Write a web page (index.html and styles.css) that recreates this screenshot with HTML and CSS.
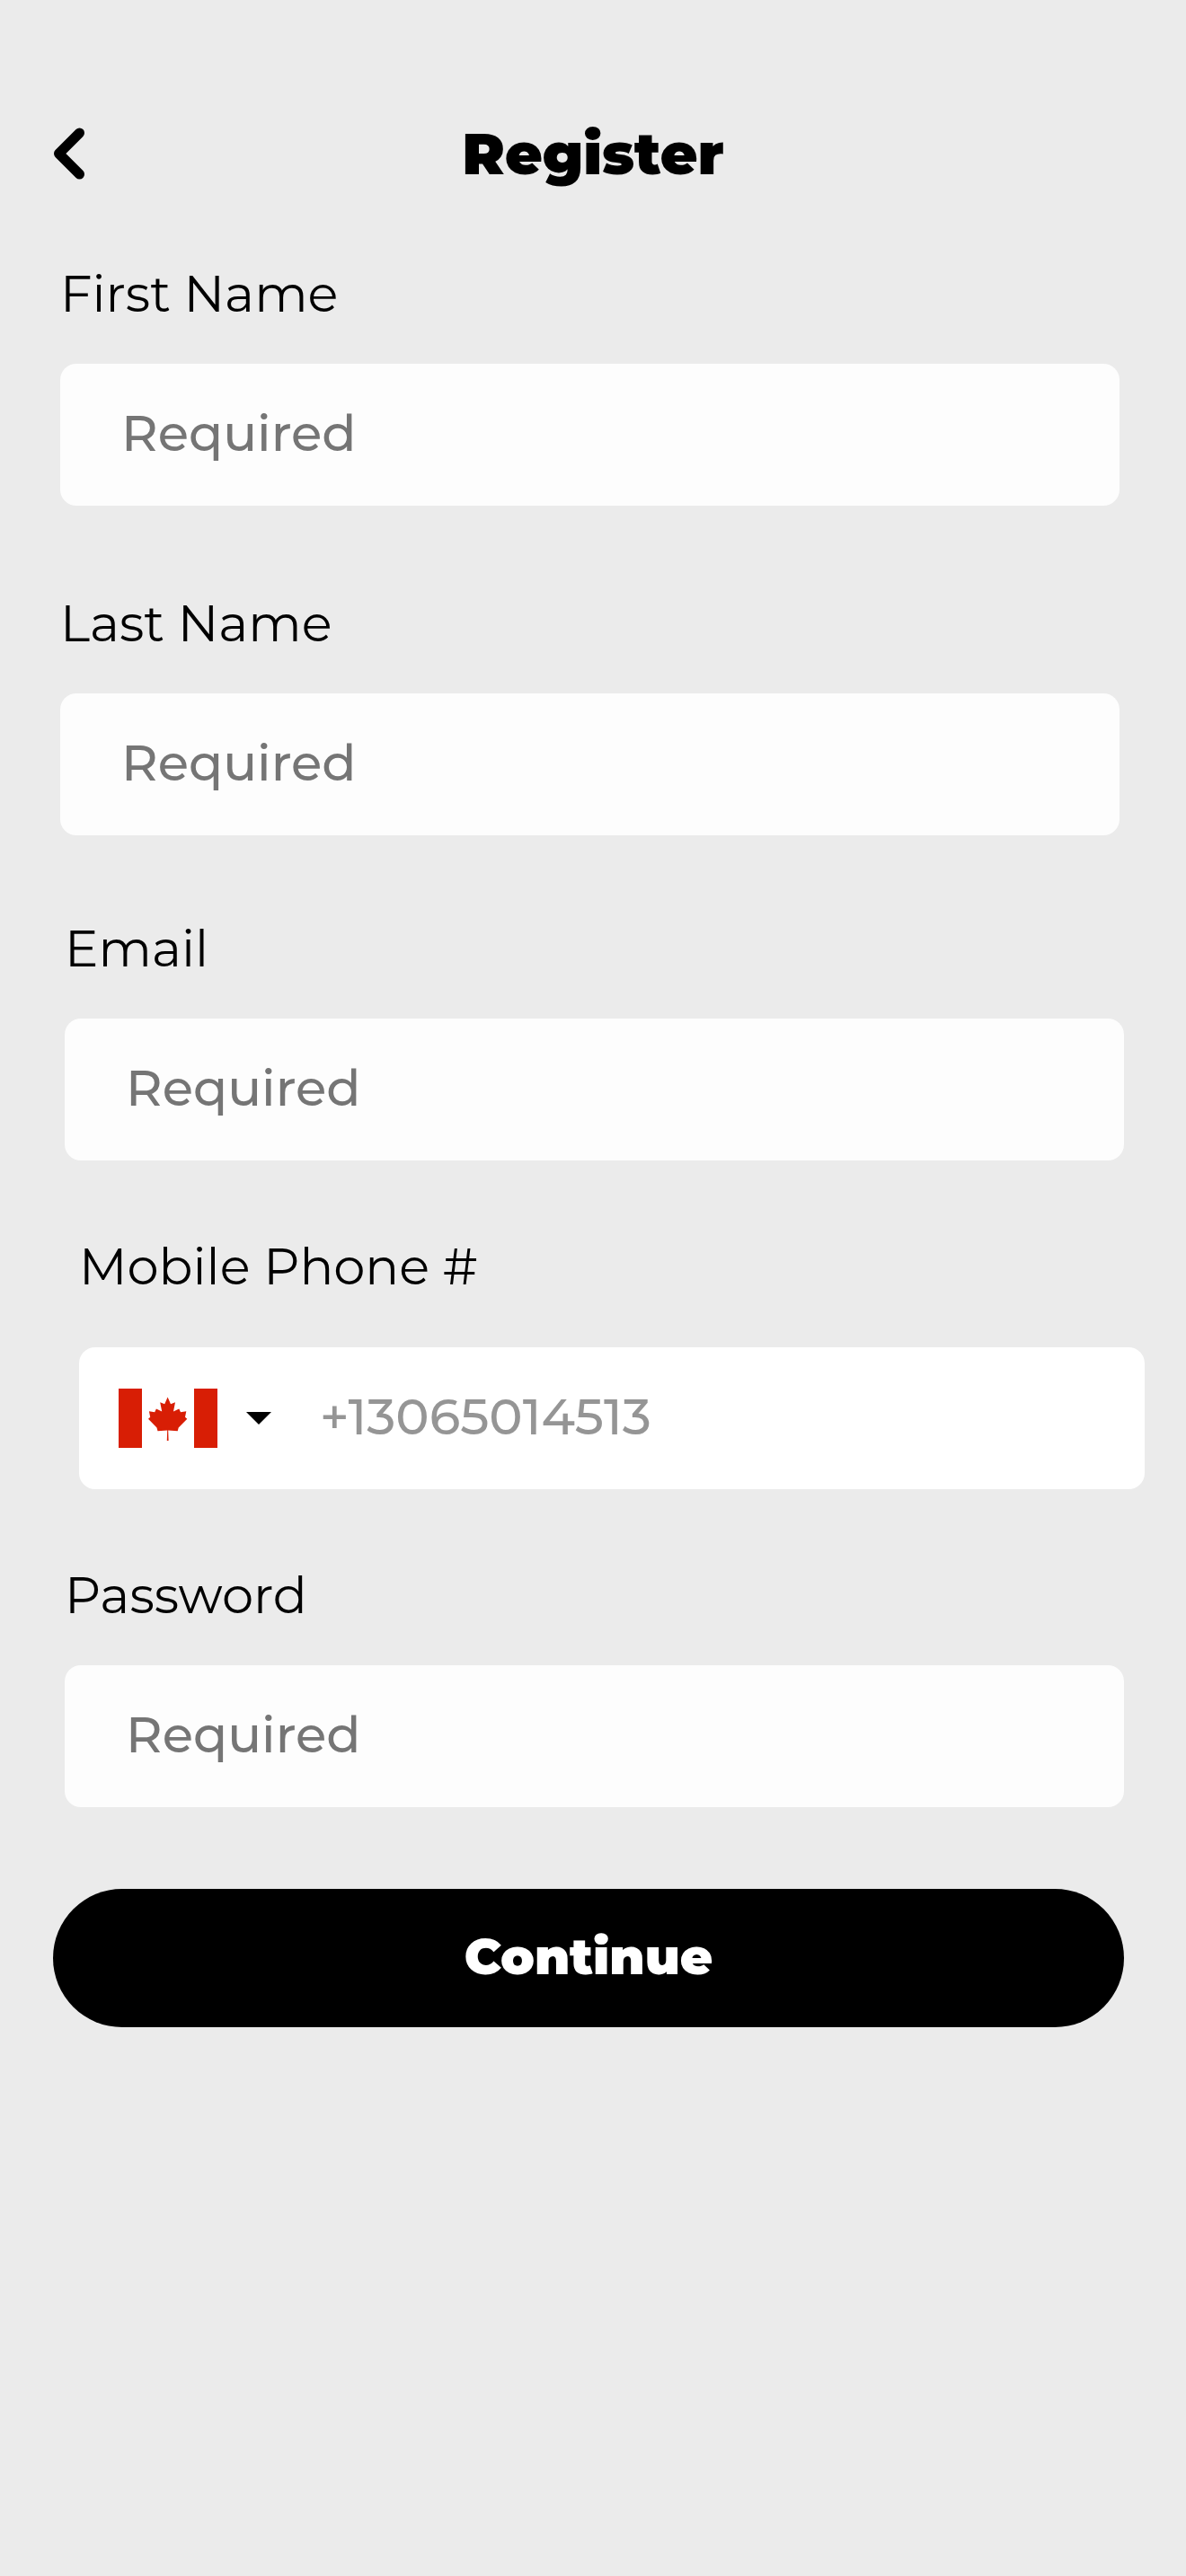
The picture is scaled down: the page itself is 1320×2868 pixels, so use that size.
FILE: index.html
```html
<!DOCTYPE html>
<html lang="en">
<head>
    <meta charset="UTF-8">
    <meta name="viewport" content="width=device-width, initial-scale=1">
    <title>Register</title>
    <link rel="stylesheet" href="styles.css">
</head>
<body>
    <header class="header">
        <button type="button" class="back" aria-label="Back">
            <svg width="36" height="58" viewBox="0 0 36 58">
                <path d="M29.500 6 L6.500 29 L29.500 52" fill="none" stroke="#000" stroke-width="11" stroke-linecap="round" stroke-linejoin="round"/>
            </svg>
        </button>
        <h1 class="title">Register</h1>
    </header>
    <form class="form">
        <div class="names">
            <div class="field">
                <label for="first">First Name</label>
                <input type="text" id="first" name="first" placeholder="Required" required>
            </div>
            <div class="field">
                <label for="last">Last Name</label>
                <input type="text" id="last" name="last" placeholder="Required" required>
            </div>
        </div>
        <div class="field account">
            <label for="email">Email</label>
            <input type="email" id="email" name="email" placeholder="Required" required>
        </div>
        <div class="field phone">
            <label for="phone">Mobile Phone #</label>
            <div class="phone-box">
                <div class="country">
                    <svg width="110" height="66" viewBox="0 0 110 66">
                        <path d="M0 0H26V66H0z M84 0H110V66H84z" fill="#d81e05"/>
                        <path d="M54.600 9.500 L58 17.200 L63 15.200 L61 25.500 L67.300 22.500 L69 26.200 L75.300 25.200 L74 31.800 L76.300 33.800 L66.700 43.500 L65.700 47.200 L55.200 46.400 L55.600 58 L53.800 58 L54.200 46.400 L43.500 47.200 L42.500 43.500 L33 33.800 L35.200 31.800 L33.900 25.200 L40.200 26.200 L41.900 22.500 L48.200 25.500 L46.200 15.200 L51.200 17.200z" fill="#d81e05"/>
                    </svg>
                    <svg width="28" height="14" viewBox="0 0 28 14">
                        <path d="M0 0H28L14 14z"/>
                    </svg>
                    <select name="country" aria-label="Country">
                        <option value="CA">Canada</option>
                        <option value="US">United States</option>
                    </select>
                </div>
                <input type="tel" id="phone" name="phone" placeholder="+13065014513">
            </div>
        </div>
        <div class="field account">
            <label for="password">Password</label>
            <input type="password" id="password" name="password" placeholder="Required" required>
        </div>
        <button type="submit" class="continue">Continue</button>
    </form>
</body>
</html>
```
FILE: styles.css
```css
* { box-sizing: border-box; }
body { margin: 0; background: #ebebeb; color: #000; font-family: Montserrat, Inter, sans-serif; }
button, input, select { font-family: inherit; border: none; }

.header { display: grid; grid-template-columns: 36px 1fr 36px; align-items: center; padding: 131px 59px 0; }
.back { padding: 0; background: none; cursor: pointer; }
.back svg { display: block; }
.title { margin: 0; font-size: 64px; line-height: 80px; font-weight: 900; text-align: center; }

.form { padding: 82px 69px 0 59px; }
.field label { display: block; margin-bottom: 44px; font-size: 56px; line-height: 68px; font-weight: 400; }
.field input { display: block; width: 100%; height: 158px; padding: 0 68px 4px; border-radius: 18px; background: #fdfdfd; font-size: 56px; font-weight: 500; }
.field input::placeholder { color: #757575; opacity: 1; }

.names { display: flex; flex-direction: column; gap: 97px; margin: 0 5px 92px 8px; }
.account { margin: 0 0 84px 13px; }
.phone { margin: 0 -23px 84px 29px; }
.phone label { margin-bottom: 56px; }
.phone-box { display: flex; align-items: center; border-radius: 18px; background: #fff; padding-left: 44px; }
.phone-box input { flex: 1; min-width: 0; padding: 0 40px 4px 54px; background: none; }
.phone-box input::placeholder { color: #959595; }
.country { position: relative; display: flex; align-items: center; gap: 32px; }
.country select { position: absolute; inset: 0; width: 100%; opacity: 0; cursor: pointer; }

.continue { display: block; width: 100%; height: 154px; margin-top: 91px; padding: 0 0 4px; border-radius: 77px; background: #000; color: #fff; font-size: 56px; font-weight: 900; cursor: pointer; }
```
